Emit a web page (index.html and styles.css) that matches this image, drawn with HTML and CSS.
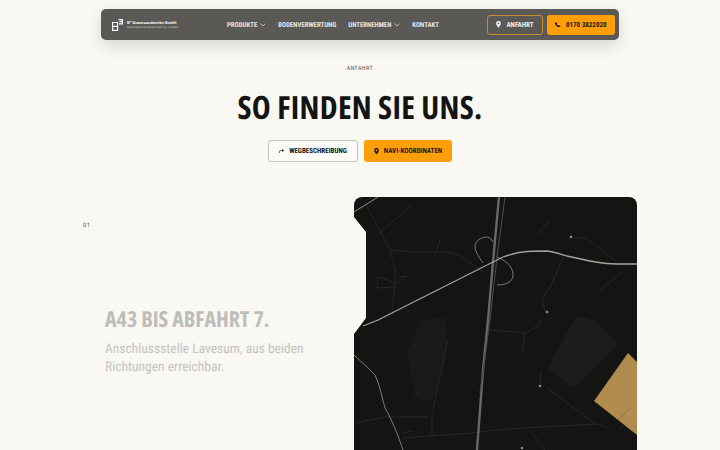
FILE: index.html
```html
<!DOCTYPE html>
<html lang="de">

<head>
    <meta charset="UTF-8">
    <meta name="viewport" content="width=device-width, initial-scale=1.0">
    <title>Anfahrt</title>
    <link rel="stylesheet" href="styles.css">
</head>

<body>
    <header class="nav">
        <div class="logo">
            <svg class="logo-mark" width="11" height="12" viewBox="0 0 11 12" fill="none" stroke="#fff" stroke-width="1.1">
                <path d="M.6 3.500h5v7.900H.6ZM.6 7.400h5" />
                <path d="M6.500.6h4v2h-3M10.500 2.600v2.300H7" />
            </svg>
            <div class="logo-text">
                <strong>B³ Quarzsandwerke GmbH</strong>
                <span>Quarzsand. Bodenverwertung. Logistik.</span>
            </div>
        </div>
        <nav class="nav-links">
            <a href="#">Produkte <svg class="chev" width="6" height="4" viewBox="0 0 6 4"><path d="M.7.7 3 3 5.300.7" /></svg></a>
            <a href="#">Bodenverwertung</a>
            <a href="#">Unternehmen <svg class="chev" width="6" height="4" viewBox="0 0 6 4"><path d="M.7.7 3 3 5.300.7" /></svg></a>
            <a href="#">Kontakt</a>
        </nav>
        <div class="nav-actions">
            <a class="btn btn-outline" href="#">
                <svg width="5" height="6.500" viewBox="0 0 7 9"><path fill="#fff" fill-rule="evenodd" d="M3.500 0A3.300 3.300 0 0 0 .2 3.300C.2 5.500 3.500 9 3.500 9s3.300-3.500 3.300-5.700A3.300 3.300 0 0 0 3.500 0Zm0 2a1.300 1.300 0 1 1 0 2.600 1.300 1.300 0 0 1 0-2.600Z" /></svg>
                Anfahrt
            </a>
            <a class="btn btn-amber" href="#">
                <svg width="5.500" height="5.500" viewBox="0 0 8 8"><path fill="#1a1712" d="M1.700.3 3 1.800c.2.200.2.500 0 .7l-.5.600c.4.900 1.200 1.700 2.300 2.300l.6-.6c.2-.2.500-.2.700 0l1.500 1.300c.2.200.2.500 0 .7l-.7.7c-.3.300-.8.400-1.200.3C3 7.100.9 5 .1 2.400 0 2 .1 1.500.4 1.200L1 .3c.2-.2.500-.2.700 0Z" /></svg>
                0170 3822020
            </a>
        </div>
    </header>

    <section class="intro">
        <p class="eyebrow">Anfahrt</p>
        <h1>So finden Sie uns.</h1>
        <div class="intro-actions">
            <a class="btn btn-light" href="#">
                <svg width="5" height="4.500" viewBox="0 0 7 6" fill="none" stroke="#1a1712" stroke-width="1"><path d="M.6 6V3.500Q.6 2 2 2h2.500" /><path fill="#1a1712" stroke="none" d="M4.300 0 7 2 4.300 4Z" /></svg>
                Wegbeschreibung
            </a>
            <a class="btn btn-amber btn-wide" href="#">
                <svg width="5" height="6.500" viewBox="0 0 7 9"><path fill="#1a1712" fill-rule="evenodd" d="M3.500 0A3.300 3.300 0 0 0 .2 3.300C.2 5.500 3.500 9 3.500 9s3.300-3.500 3.300-5.700A3.300 3.300 0 0 0 3.500 0Zm0 2a1.300 1.300 0 1 1 0 2.600 1.300 1.300 0 0 1 0-2.600Z" /></svg>
                Navi-Koordinaten
            </a>
        </div>
    </section>

    <section class="route">
        <div class="route-text">
            <span class="step-no">01</span>
            <div class="step">
                <h2>A43 bis Abfahrt 7.</h2>
                <p>Anschlussstelle Lavesum, aus beiden Richtungen erreichbar.</p>
            </div>
        </div>
        <div class="map">
            <svg width="283" height="253" viewBox="354 197 283 253" fill="none">
                <!-- flaechen -->
                <path fill="#181b18" d="M420 320 445 318 448 340 435 398 425 402 415 397 407 353Z" />
                <path fill="#1a1d1a" d="M568 330 578 316 593 320 618 343 590 373 573 388 548 368Z" />
                <path fill="#b08d4e" d="M628 353 594 401 637 435V362Z" />
                <path stroke="#7f6a3d" stroke-width=".6" d="M630 408 618 420" />
                <!-- kleine wege -->
                <g stroke="#2f2f2c" stroke-width=".7">
                    <path d="M365 203 378 227 390 250 395 270 395 287 392 310" />
                    <path d="M390 250 415 252 445 252 460 255 477 268 485 273" />
                    <path d="M378 277 377 288 395 287M378 277 387 280 395 284 407 276 398 277" />
                    <path d="M378 235 400 215 412 205M435 255 440 240" />
                    <path d="M448 340 432 415 432 437M355 423 385 417 428 417" />
                    <path d="M402 438 472 433 495 430 525 428 597 424 607 427M402 433 413 431" />
                    <path d="M490 330 525 333 522 353M525 333 540 325 540 320" />
                    <path d="M547 388 597 425M541 372 540 386" />
                    <path d="M571 230 571 237M573 238 587 238 617 262" />
                    <path d="M563 257 558 270 550 287 542 298 545 312" />
                    <path d="M537 235 550 220M600 290 625 270M530 430 545 450" />
                </g>
                <!-- nebenstrassen -->
                <g stroke="#7b7b77" stroke-width="1">
                    <path d="M354 355C362 363 368 367 375 375 380 385 382 398 385 408 392 420 398 435 403 450" />
                    <path d="M483 263C478 256 475 251 475 247 475 241 481 237 487 237 490 237 492 240 493 242" />
                    <path d="M497 257C505 260 513 266 513 275 513 281 508 285 497 285" />
                    <path stroke="#8a8a86" d="M354 212 378 197" />
                </g>
                <!-- autobahn -->
                <path stroke="#686865" stroke-width="2.400" d="M477 450 483 370 488 320 493 262 499 197" />
                <path stroke="#4a4a47" stroke-width="1.100" d="M480 393 490 320 497 257 505 197" />
                <!-- bundesstrasse -->
                <path stroke="#a3a39e" stroke-width="1.300" d="M363 326 378 320 493 262 503 257 C512 254 518 252 523 252 531 251 540 251 547 251 555 252 560 254 567 256L590 261C600 263 608 264 617 264H637" />
                <!-- punkte -->
                <g fill="#8b8b87">
                    <circle cx="571" cy="237" r="1.300" />
                    <circle cx="547" cy="312" r="1.300" />
                    <circle cx="540" cy="386" r="1.300" />
                    <circle cx="522" cy="448" r="1.300" />
                </g>
            </svg>
        </div>
    </section>
</body>

</html>
```
FILE: styles.css
```css
* {
    box-sizing: border-box;
}

html,
body {
    height: 450px;
    overflow: hidden;
}

body {
    margin: 0;
    padding-top: 9px;
    background-color: #f9f8f3;
    color: #141412;
    font-family: Roboto, sans-serif;
    text-rendering: geometricPrecision;
}

a {
    color: inherit;
    text-decoration: none;
}

svg {
    flex-shrink: 0;
}

.nav {
    width: 518px;
    height: 31px;
    margin-left: 101px;
    padding: 0 4px 0 11px;
    display: flex;
    align-items: center;
    background-color: #5b5955;
    border-radius: 5px;
    box-shadow: 0 6px 16px rgba(0, 0, 0, 0.14);
}

.logo {
    width: 115px;
    display: flex;
    align-items: center;
    gap: 4px;
    color: #fff;
}

.logo-text {
    display: flex;
    flex-direction: column;
    font-family: Inter, sans-serif;
    white-space: nowrap;
}

.logo-text strong {
    font-size: 3.800px;
    line-height: 5px;
}

.logo-text span {
    font-size: 2.800px;
    line-height: 4px;
    color: #c9c8c4;
}

.nav-links {
    display: flex;
    gap: 12px;
    color: #e9e8e4;
    font-size: 6.800px;
    font-stretch: 75%;
    font-weight: bold;
    text-transform: uppercase;
}

.nav-links a {
    display: flex;
    align-items: center;
    gap: 3px;
    white-space: nowrap;
}

.chev {
    fill: none;
    stroke: #d8d7d3;
    stroke-width: 0.8;
}

.nav-actions {
    margin-left: auto;
    display: flex;
    gap: 4px;
}

.btn {
    height: 20px;
    display: flex;
    align-items: center;
    justify-content: center;
    gap: 5px;
    border-radius: 3px;
    font-size: 7px;
    font-stretch: 75%;
    font-weight: bold;
    text-transform: uppercase;
    white-space: nowrap;
}

.btn-outline {
    width: 56px;
    border: 1px solid #c68e2c;
    color: #f1f0ec;
}

.btn-amber {
    width: 68px;
    background-color: #fe9f0a;
    color: #1a1712;
}

.intro {
    margin-top: 25px;
    display: flex;
    flex-direction: column;
    align-items: center;
}

.eyebrow {
    margin: 0;
    color: #55534e;
    font-size: 6px;
    font-stretch: 75%;
    line-height: 8px;
    letter-spacing: 0.5px;
    text-transform: uppercase;
}

h1 {
    margin: 17px 0 0;
    font-family: 'Open Sans', sans-serif;
    font-size: 32px;
    font-stretch: 75%;
    font-weight: 700;
    line-height: 36px;
    letter-spacing: 0.3px;
    text-transform: uppercase;
}

.intro-actions {
    margin-top: 14px;
    display: flex;
    gap: 6px;
}

.intro-actions .btn {
    height: 22px;
}

.btn-light {
    width: 90px;
    background-color: #fcfbf8;
    border: 1px solid #c4c3bd;
}

.btn-wide {
    width: 88px;
}

.route {
    margin-top: 35px;
    padding: 0 83px;
    display: flex;
    justify-content: space-between;
}

.route-text {
    width: 240px;
    padding-top: 25px;
}

.step-no {
    display: block;
    color: #55534e;
    font-size: 6px;
    line-height: 7px;
    letter-spacing: 0.5px;
}

.step {
    width: 215px;
    margin-top: 77px;
    margin-left: 22px;
}

h2 {
    margin: 0;
    color: #bdbdb9;
    font-family: 'Open Sans', sans-serif;
    font-size: 22px;
    font-stretch: 75%;
    font-weight: 700;
    line-height: 26px;
    text-transform: uppercase;
}

.step p {
    margin: 8px 0 0;
    color: #c4c4c0;
    font-size: 13.500px;
    font-stretch: 80%;
    line-height: 18px;
}

.map {
    width: 283px;
    height: 253px;
    flex-shrink: 0;
    overflow: hidden;
    background-color: #141412;
    border-radius: 8px 8px 0 0;
    clip-path: polygon(0 0, 100% 0, 100% 100%, 0 100%, 0 137px, 12px 121px, 12px 35px, 0 20px);
}

.map svg {
    display: block;
}
```
